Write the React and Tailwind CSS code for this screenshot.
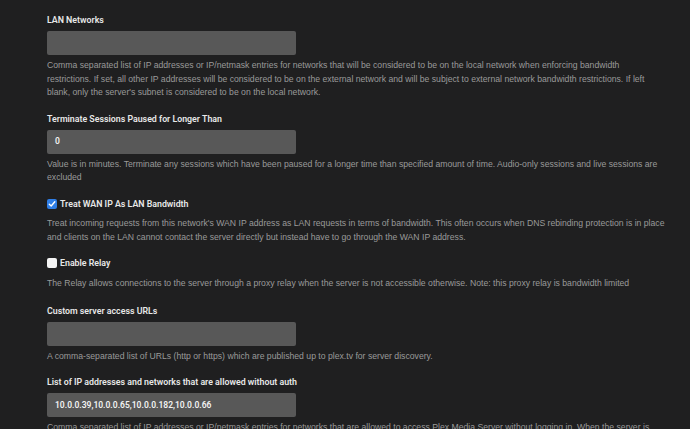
import React from "react";

const font = { fontFamily: '"Liberation Sans", Arial, sans-serif' };

function Label({ children }) {
  return (
    <p className="text-[8.8px] font-semibold leading-[12px] text-[#e8e8e8]" style={{ fontFamily: "Roboto, Arial, sans-serif" }}>
      {children}
    </p>
  );
}

function Field({ value }) {
  return (
    <div className="mt-[5px] flex h-[24px] w-[249px] items-center rounded-[2px] bg-[#585858] px-[8px] text-[8.5px] font-semibold text-[#f2f2f2]" style={{ fontFamily: "Roboto, Arial, sans-serif" }}>
      {value}
    </div>
  );
}

function Desc({ children, className = "" }) {
  return (
    <p className={`max-w-[630px] text-[8.66px] leading-[13.6px] text-[#9a9a9a] ${className}`}>
      {children}
    </p>
  );
}

function Check({ checked }) {
  if (checked) {
    return (
      <span className="flex h-[10px] w-[10px] items-center justify-center rounded-[2px] bg-[#2f7ee6]">
        <svg width="8" height="8" viewBox="0 0 8 8" fill="none">
          <path d="M1.3 4.2 3.2 6 6.8 1.8" stroke="#fff" strokeWidth="1.4" strokeLinecap="round" strokeLinejoin="round" />
        </svg>
      </span>
    );
  }
  return <span className="h-[10px] w-[10px] rounded-[2px] bg-[#f4f4f4]" />;
}

export default function App() {
  return (
    <main className="h-[429px] w-[690px] overflow-hidden bg-[#1f1f20] pl-[47px] pr-[10px] pt-[14px]" style={font}>
      <section>
        <Label>LAN Networks</Label>
        <Field value="" />
        <Desc className="mt-[4px]">
          Comma separated list of IP addresses or IP/netmask entries for networks that will be considered to be on the local network when enforcing bandwidth
          <br />
          restrictions. If set, all other IP addresses will be considered to be on the external network and will be subject to external network bandwidth restrictions. If left
          <br />
          blank, only the server's subnet is considered to be on the local network.
        </Desc>
      </section>

      <section className="mt-[13px]">
        <Label>Terminate Sessions Paused for Longer Than</Label>
        <Field value="0" />
        <Desc className="mt-[4px]">
          Value is in minutes. Terminate any sessions which have been paused for a longer time than specified amount of time. Audio-only sessions and live sessions are
          <br />
          excluded
        </Desc>
      </section>

      <section className="mt-[13px]">
        <div className="flex items-center gap-[3px]">
          <Check checked />
          <Label>Treat WAN IP As LAN Bandwidth</Label>
        </div>
        <Desc className="mt-[7px]">
          Treat incoming requests from this network's WAN IP address as LAN requests in terms of bandwidth. This often occurs when DNS rebinding protection is in place
          <br />
          and clients on the LAN cannot contact the server directly but instead have to go through the WAN IP address.
        </Desc>
      </section>

      <section className="mt-[13px]">
        <div className="flex items-center gap-[3px]">
          <Check />
          <Label>Enable Relay</Label>
        </div>
        <Desc className="mt-[8px]">
          The Relay allows connections to the server through a proxy relay when the server is not accessible otherwise. Note: this proxy relay is bandwidth limited
        </Desc>
      </section>

      <section className="mt-[14px]">
        <Label>Custom server access URLs</Label>
        <Field value="" />
        <Desc className="mt-[4px]">
          A comma-separated list of URLs (http or https) which are published up to plex.tv for server discovery.
        </Desc>
      </section>

      <section className="mt-[13px]">
        <Label>List of IP addresses and networks that are allowed without auth</Label>
        <Field value="10.0.0.39,10.0.0.65,10.0.0.182,10.0.0.66" />
        <Desc className="mt-[4px]">
          Comma separated list of IP addresses or IP/netmask entries for networks that are allowed to access Plex Media Server without logging in. When the server is
          <br />
          signed out and does not have access to the internet, this setting is ignored.
        </Desc>
      </section>
    </main>
  );
}
